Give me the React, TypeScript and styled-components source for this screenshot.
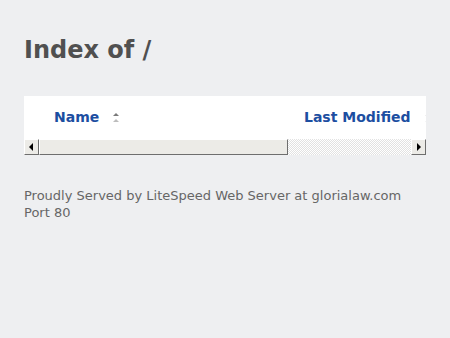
import React from "react";
import styled, { createGlobalStyle } from "styled-components";

const GlobalStyle = createGlobalStyle`
  html, body { margin: 0; padding: 0; }
  body {
    background: #eeeff1;
    font-family: "DejaVu Sans", "Liberation Sans", sans-serif;
  }
`;

const Page = styled.main`
  padding: 36px 24px 24px;
`;

const Title = styled.h1`
  margin: 0;
  font-size: 24px;
  line-height: 28px;
  font-weight: bold;
  color: #505050;
`;

const Panel = styled.section`
  margin-top: 32px;
  background: #fff;
`;

const Viewport = styled.div`
  overflow: hidden;
`;

const Table = styled.table`
  width: 601px;
  table-layout: fixed;
  border-collapse: collapse;
`;

const HeadCell = styled.th<{ $w: number }>`
  box-sizing: border-box;
  width: ${(p) => p.$w}px;
  height: 43px;
  padding: 13px 0 14px 30px;
  text-align: left;
  vertical-align: top;
  white-space: nowrap;
  font-size: 14px;
  line-height: 16px;
  font-weight: bold;
`;

const SortLink = styled.a`
  color: #1c4ea1;
  text-decoration: none;
`;

const SortIcon = styled.span<{ $active?: boolean }>`
  display: inline-flex;
  flex-direction: column;
  gap: 3px;
  margin: 4px 0 0 14px;
  vertical-align: top;

  &::before,
  &::after {
    content: "";
    width: 0;
    height: 0;
    border-left: 3.5px solid transparent;
    border-right: 3.5px solid transparent;
  }
  &::before {
    border-bottom: 3px solid ${(p) => (p.$active ? "#7a7a7a" : "#e2e2e2")};
  }
  &::after {
    border-bottom: 3px solid ${(p) => (p.$active ? "#bdbdbd" : "#ececec")};
  }
`;

/* classic horizontal scrollbar */
const ScrollBar = styled.div`
  display: flex;
  height: 16px;
  background: repeating-conic-gradient(#ffffff 0 25%, #e2e2e2 0 50%) 0 0 / 2px 2px;
`;

const Bevel = styled.div`
  box-sizing: border-box;
  height: 16px;
  background-color: #ecebe7;
  border: 1px solid;
  border-color: #ffffff #6e6e6e #6e6e6e #ffffff;
`;

const ArrowButton = styled(Bevel)<{ $dir: "left" | "right" }>`
  flex: 0 0 15px;
  display: flex;
  align-items: center;
  justify-content: center;

  &::before {
    content: "";
    width: 0;
    height: 0;
    border-top: 4px solid transparent;
    border-bottom: 4px solid transparent;
    ${(p) =>
      p.$dir === "left"
        ? "border-right: 4px solid #000; margin-right: 1px;"
        : "border-left: 4px solid #000; margin-left: 1px;"}
  }
`;

const Thumb = styled(Bevel)`
  flex: 0 0 auto;
`;

const Track = styled.div`
  flex: 1;
`;

const Footer = styled.address`
  margin-top: 32px;
  font-style: normal;
  font-size: 13px;
  line-height: 17px;
  color: #666;
`;

const columns = [
  { label: "Name", w: 250, active: true },
  { label: "Last Modified", w: 200, active: false },
  { label: "Size", w: 151, active: false },
];

export default function App() {
  const thumbWidth = 249;
  return (
    <>
      <GlobalStyle />
      <Page>
        <Title>Index of /</Title>
        <Panel>
          <Viewport>
            <Table>
              <thead>
                <tr>
                  {columns.map((c) => (
                    <HeadCell key={c.label} $w={c.w}>
                      <SortLink href="#">{c.label}</SortLink>
                      <SortIcon $active={c.active} />
                    </HeadCell>
                  ))}
                </tr>
              </thead>
            </Table>
          </Viewport>
          <ScrollBar>
            <ArrowButton $dir="left" />
            <Thumb style={{ width: thumbWidth }} />
            <Track />
            <ArrowButton $dir="right" />
          </ScrollBar>
        </Panel>
        <Footer>Proudly Served by LiteSpeed Web Server at glorialaw.com Port 80</Footer>
      </Page>
    </>
  );
}
